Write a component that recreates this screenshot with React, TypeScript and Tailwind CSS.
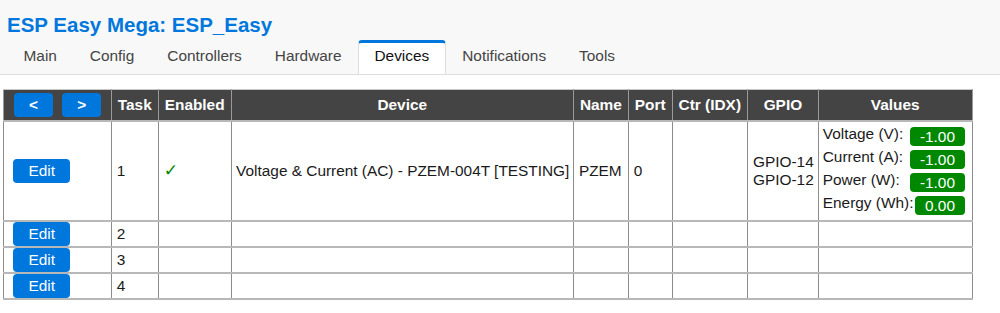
import React from 'react';

const tabs = ['Main', 'Config', 'Controllers', 'Hardware', 'Devices', 'Notifications', 'Tools'];
const active = 'Devices';

const values: [string, string][] = [
    ['Voltage (V):', '-1.00'],
    ['Current (A):', '-1.00'],
    ['Power (W):', '-1.00'],
    ['Energy (Wh):', '0.00'],
];

const thBase = 'bg-[#444] text-white font-bold border-x border-x-[#9a9a9a] border-t border-t-[#c8c8c8] border-b-2 border-b-[#b8b8b8] text-center align-middle whitespace-nowrap';
const th = thBase + ' px-[6px] py-[6px]';
const cell = 'py-0 border-x border-x-[#8c8c8c] border-y-2 border-y-[#b8b8b8] align-middle whitespace-nowrap';
const td = cell + ' px-[5px]';

const EditButton: React.FC = () => (
    <button className="bg-[#07d] text-white rounded-[4px] px-[15.4px] h-[24px] leading-[24px] block">Edit</button>
);

const App: React.FC = () => {
    return (
        <div className="w-[1000px] h-[313px] bg-white font-['Liberation_Sans',Arial,sans-serif] text-[15.4px] leading-[17.7px] text-[#1a1a1a]">
            <div className="bg-[#f8f8f8] border-b border-[#ddd] px-[7px] pt-[13px]">
                <h1 className="text-[20.5px] leading-[23.6px] font-bold text-[#07d]">ESP Easy Mega: ESP_Easy</h1>
                <div className="flex mt-[3px]">
                    {tabs.map(t => (
                        <div
                            key={t}
                            className={
                                t === active
                                    ? 'border-t-[3px] border-x border-t-[#07d] border-x-[#ddd] bg-white text-[#111] px-[15.5px] pt-[4px] pb-[10px] rounded-t-[4px]'
                                    : 'border-t-[3px] border-x border-transparent text-[#444] px-[15.5px] pt-[4px] pb-[10px]'
                            }
                        >
                            {t}
                        </div>
                    ))}
                </div>
            </div>

            <table className="border-collapse ml-[3px] mt-[13.5px]">
                <thead>
                    <tr>
                        <th className={thBase + ' px-[9.5px] py-[3px]'}>
                            <div className="flex gap-[9px]">
                                <button className="bg-[#07d] text-white rounded-[4px] px-[15.4px] h-[24px] leading-[24px]">&lt;</button>
                                <button className="bg-[#07d] text-white rounded-[4px] px-[15px] h-[24px] leading-[24px]">&gt;</button>
                            </div>
                        </th>
                        <th className={th}>Task</th>
                        <th className={th}>Enabled</th>
                        <th className={th}>Device</th>
                        <th className={th}>Name</th>
                        <th className={th}>Port</th>
                        <th className={th}>Ctr (IDX)</th>
                        <th className={th}>GPIO</th>
                        <th className={th}>Values</th>
                    </tr>
                </thead>
                <tbody>
                    <tr>
                        <td className={cell + ' pl-[9px] pr-[5px]'}><EditButton /></td>
                        <td className={td}>1</td>
                        <td className={td}><span className="font-['DejaVu_Sans',sans-serif] text-[#080] text-[17px]">✓</span></td>
                        <td className={cell + ' pl-[4.5px] pr-[3.5px]'}>Voltage &amp; Current (AC) - PZEM-004T [TESTING]</td>
                        <td className={td}>PZEM</td>
                        <td className={td}>0</td>
                        <td className={td}></td>
                        <td className={cell + ' pl-[5px] pr-[4px]'}>GPIO-14<br />GPIO-12</td>
                        <td className={cell + ' pl-[4px] pr-[5px] py-[3px]'}>
                            {values.map(([label, v]) => (
                                <div key={label} className="flex justify-between items-start">
                                    <span className="whitespace-nowrap">{label}</span>
                                    <span className="m-[2px] px-[9.6px] py-[1px] rounded-[4px] bg-[#080] text-white leading-[17px]">{v}</span>
                                </div>
                            ))}
                        </td>
                    </tr>
                    {[2, 3, 4].map(n => (
                        <tr key={n}>
                            <td className={cell + ' pl-[9px] pr-[5px]'}><EditButton /></td>
                            <td className={td}>{n}</td>
                            <td className={td}></td>
                            <td className={td}></td>
                            <td className={td}></td>
                            <td className={td}></td>
                            <td className={td}></td>
                            <td className={td}></td>
                            <td className={td}></td>
                        </tr>
                    ))}
                </tbody>
            </table>
        </div>
    );
};

export default App;
